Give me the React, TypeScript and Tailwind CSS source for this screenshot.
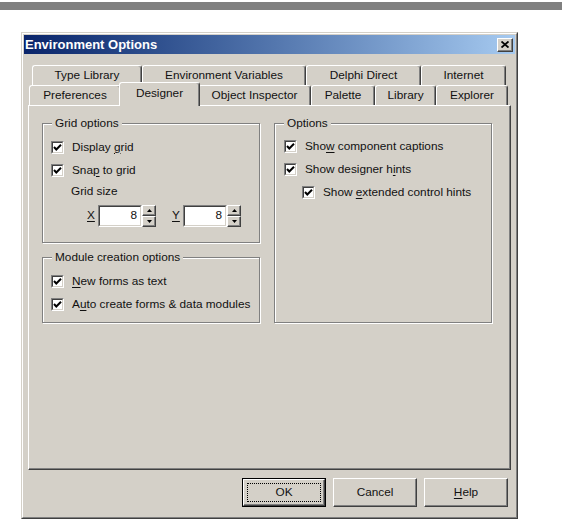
import type { ReactNode } from "react";

const raised =
  "border border-t-white border-l-white border-r-[#404040] border-b-[#404040] shadow-[inset_-1px_-1px_0_#808080]";

function Mn({ children }: { children: ReactNode }) {
  return <span className="underline underline-offset-[2px]">{children}</span>;
}

function CheckBox() {
  return (
    <span className="flex h-[13px] w-[13px] shrink-0 border border-t-[#808080] border-l-[#808080] border-r-white border-b-white">
      <span className="flex flex-1 items-center justify-center border border-t-[#404040] border-l-[#404040] border-r-[#d4d0c8] border-b-[#d4d0c8] bg-white">
        <svg width="9" height="9" viewBox="0 0 9 9">
          <path d="M1 4 L3.3 6.5 L8 1.8" fill="none" stroke="black" strokeWidth="2" />
        </svg>
      </span>
    </span>
  );
}

function CheckRow({ children, indent = false }: { children: ReactNode; indent?: boolean }) {
  return (
    <div className={`flex h-[23px] items-center gap-[8px] ${indent ? "ml-[18px]" : ""}`}>
      <CheckBox />
      <span>{children}</span>
    </div>
  );
}

function GroupBox({
  title,
  className,
  children,
}: {
  title: string;
  className: string;
  children: ReactNode;
}) {
  return (
    <div
      className={`relative border border-[#808080] shadow-[inset_1px_1px_0_#fff,1px_1px_0_#fff] ${className}`}
    >
      <span className="absolute -top-[8px] left-[9px] bg-[#d4d0c8] px-[3px] leading-[14px]">
        {title}
      </span>
      {children}
    </div>
  );
}

function Arrow({ up }: { up: boolean }) {
  return (
    <svg width="5" height="3" viewBox="0 0 5 3">
      <path d={up ? "M2.5 0 L5 3 L0 3 Z" : "M0 0 L5 0 L2.5 3 Z"} fill="black" />
    </svg>
  );
}

function SpinEdit({ label }: { label: string }) {
  return (
    <div className="flex items-center">
      <span className="w-[11px]">
        <Mn>{label}</Mn>
      </span>
      <div className="flex h-[22px] w-[44px] border border-t-[#808080] border-l-[#808080] border-r-white border-b-white">
        <div className="flex flex-1 items-center justify-end border border-t-[#404040] border-l-[#404040] border-r-[#d4d0c8] border-b-[#d4d0c8] bg-white pr-[3px]">
          8
        </div>
      </div>
      <div className="flex h-[22px] w-[14px] flex-col">
        <div className={`flex h-[11px] items-center justify-center bg-[#d4d0c8] ${raised}`}>
          <Arrow up />
        </div>
        <div className={`flex h-[11px] items-center justify-center bg-[#d4d0c8] ${raised}`}>
          <Arrow up={false} />
        </div>
      </div>
    </div>
  );
}

function Tab({ label, width }: { label: string; width: string }) {
  return (
    <div
      className={`flex h-[20px] shrink-0 items-center justify-center rounded-t-[3px] border-t border-l border-r border-t-white border-l-white border-r-[#404040] shadow-[inset_-1px_0_0_#808080] ${width}`}
    >
      {label}
    </div>
  );
}

function Btn({ children, isDefault = false }: { children: ReactNode; isDefault?: boolean }) {
  if (isDefault) {
    return (
      <div className="flex h-[29px] w-[84px] border border-black">
        <div className={`flex flex-1 p-[3px] ${raised}`}>
          <div className="flex flex-1 items-center justify-center border border-dotted border-black">
            {children}
          </div>
        </div>
      </div>
    );
  }
  return (
    <div className={`flex h-[29px] w-[84px] items-center justify-center ${raised}`}>{children}</div>
  );
}

export default function App() {
  return (
    <div className="h-[523px] w-[562px] overflow-hidden bg-white font-['Liberation_Sans',Arial,sans-serif] text-[11.8px] text-[#111]">
      <div className="mt-[2px] h-[8px] bg-[#808080]" />

      <div className="ml-[21px] mt-[22px] h-[487px] w-[497px] border border-t-[#d4d0c8] border-l-[#d4d0c8] border-r-[#404040] border-b-[#404040]">
        <div className="flex h-full flex-col border border-t-white border-l-white border-r-[#808080] border-b-[#808080] bg-[#d4d0c8] p-[1px]">
          {/* title bar */}
          <div className="flex h-[19px] shrink-0 items-center justify-between bg-linear-to-r from-[#0a246a] to-[#a6caf0] pl-[1px]">
            <span className="text-[13px] font-bold text-white">Environment Options</span>
            <div className={`mr-[2px] flex h-[14px] w-[16px] items-center justify-center bg-[#d4d0c8] ${raised}`}>
              <svg width="8" height="7" viewBox="0 0 8 7">
                <path d="M0.5 0.5 L7.5 6.5 M7.5 0.5 L0.5 6.5" stroke="black" strokeWidth="1.8" />
              </svg>
            </div>
          </div>

          <div className="flex flex-1 flex-col px-[4px] pt-[11px]">
            {/* tabs */}
            <div className="flex h-[20px] pl-[4px]">
              <Tab label="Type Library" width="w-[110px]" />
              <Tab label="Environment Variables" width="w-[164px]" />
              <Tab label="Delphi Direct" width="w-[115px]" />
              <Tab label="Internet" width="w-[85px]" />
            </div>
            <div className="flex h-[20px] items-start pl-[1px]">
              <Tab label="Preferences" width="w-[92px]" />
              <div className="relative z-10 -mx-[2px] -mt-[3px] flex h-[24px] w-[81px] shrink-0 items-center justify-center rounded-t-[3px] border-t border-l border-r border-t-white border-l-white border-r-[#404040] bg-[#d4d0c8] pb-[2px] shadow-[inset_-1px_0_0_#808080]">
                Designer
              </div>
              <Tab label="Object Inspector" width="w-[113px]" />
              <Tab label="Palette" width="w-[64px]" />
              <Tab label="Library" width="w-[61px]" />
              <Tab label="Explorer" width="w-[72px]" />
            </div>

            {/* page */}
            <div className="flex h-[365px] gap-[14px] border border-t-white border-l-white border-r-[#404040] border-b-[#404040] pl-[13px] pt-[17px] shadow-[inset_-1px_-1px_0_#808080]">
              <div className="flex w-[218px] flex-col gap-[14px]">
                <GroupBox title="Grid options" className="h-[120px] pl-[8px] pt-[12px]">
                  <CheckRow>
                    Display <Mn>g</Mn>rid
                  </CheckRow>
                  <CheckRow>
                    Sna<Mn>p</Mn> to grid
                  </CheckRow>
                  <div className="flex h-[20px] items-center pl-[20px]">Grid size</div>
                  <div className="mt-[3px] flex gap-[16px] pl-[36px]">
                    <SpinEdit label="X" />
                    <SpinEdit label="Y" />
                  </div>
                </GroupBox>
                <GroupBox title="Module creation options" className="h-[66px] pl-[8px] pt-[12px]">
                  <CheckRow>
                    <Mn>N</Mn>ew forms as text
                  </CheckRow>
                  <CheckRow>
                    A<Mn>u</Mn>to create forms &amp; data modules
                  </CheckRow>
                </GroupBox>
              </div>
              <GroupBox title="Options" className="h-[200px] w-[218px] pl-[9px] pt-[11px]">
                <CheckRow>
                  Sho<Mn>w</Mn> component captions
                </CheckRow>
                <CheckRow>
                  Show designer h<Mn>i</Mn>nts
                </CheckRow>
                <CheckRow indent>
                  Show <Mn>e</Mn>xtended control hints
                </CheckRow>
              </GroupBox>
            </div>

            {/* buttons */}
            <div className="mt-[8px] flex justify-end gap-[7px] pr-[3px]">
              <Btn isDefault>OK</Btn>
              <Btn>Cancel</Btn>
              <Btn>
                <Mn>H</Mn>elp
              </Btn>
            </div>
          </div>
        </div>
      </div>
    </div>
  );
}
